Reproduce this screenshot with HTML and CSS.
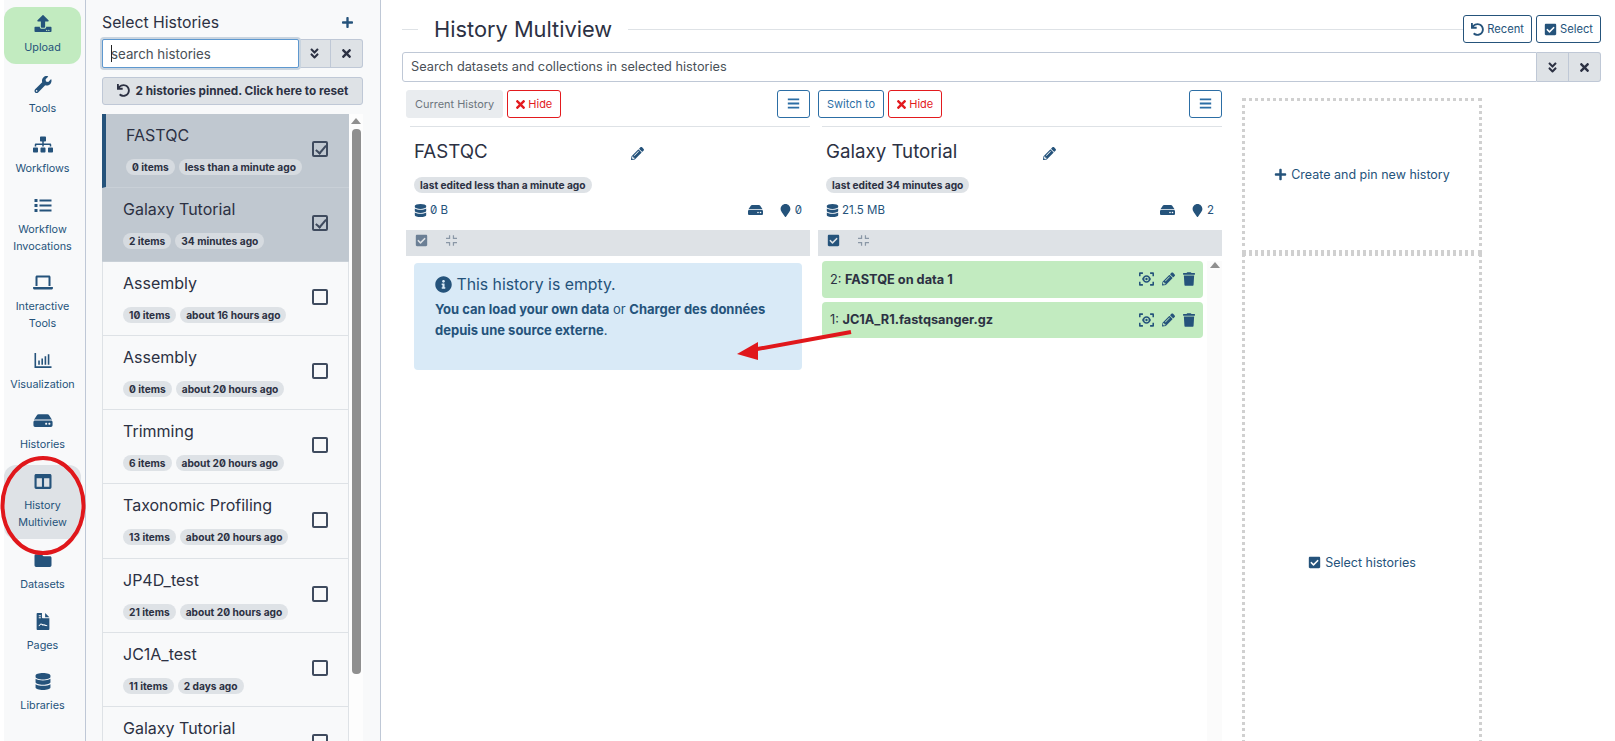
FILE: index.html
```html
<!DOCTYPE html>
<html lang="en">
<head>
    <meta charset="UTF-8">
    <title>Galaxy - History Multiview</title>
    <link rel="stylesheet" href="styles.css">
</head>
<body>
<svg class="sprites" width="0" height="0">
    <symbol id="i-upload" viewBox="0 0 512 512"><path d="M296 384h-80c-13.3 0-24-10.7-24-24V192h-87.7c-17.8 0-26.7-21.5-14.1-34.1L242.3 5.7c7.5-7.5 19.8-7.5 27.3 0l152.2 152.2c12.6 12.6 3.7 34.1-14.1 34.1H320v168c0 13.3-10.7 24-24 24zm216-8v112c0 13.3-10.7 24-24 24H24c-13.3 0-24-10.7-24-24V376c0-13.3 10.7-24 24-24h136v8c0 30.9 25.1 56 56 56h80c30.9 0 56-25.1 56-56v-8h136c13.3 0 24 10.7 24 24zm-124 88c0-11-9-20-20-20s-20 9-20 20 9 20 20 20 20-9 20-20zm64 0c0-11-9-20-20-20s-20 9-20 20 9 20 20 20 20-9 20-20z"/></symbol>
    <symbol id="i-wrench" viewBox="0 0 512 512"><path d="M507.73 109.1c-2.24-9.03-13.54-12.09-20.12-5.51l-74.36 74.36-67.88-11.31-11.31-67.88 74.36-74.36c6.62-6.62 3.43-17.9-5.66-20.16-47.38-11.74-99.55.91-136.58 37.93-39.64 39.64-50.55 97.1-34.05 147.2L18.74 402.76c-24.99 24.99-24.99 65.51 0 90.5 24.99 24.99 65.51 24.99 90.5 0l213.21-213.21c50.12 16.71 107.47 5.68 147.37-34.22 37.07-37.07 49.7-89.32 37.91-136.73zM64 472c-13.25 0-24-10.75-24-24 0-13.26 10.75-24 24-24s24 10.74 24 24c0 13.25-10.75 24-24 24z"/></symbol>
    <symbol id="i-sitemap" viewBox="0 0 640 512"><path d="M128 352H32c-17.67 0-32 14.33-32 32v96c0 17.67 14.33 32 32 32h96c17.67 0 32-14.33 32-32v-96c0-17.67-14.33-32-32-32zm-24-80h192v48h48v-48h192v48h48v-57.59c0-21.17-17.23-38.41-38.41-38.41H344v-64h40c17.67 0 32-14.33 32-32V32c0-17.67-14.33-32-32-32H256c-17.67 0-32 14.33-32 32v96c0 17.67 14.33 32 32 32h40v64H94.41C73.23 224 56 241.23 56 262.41V320h48v-48zm264 80h-96c-17.67 0-32 14.33-32 32v96c0 17.67 14.33 32 32 32h96c17.67 0 32-14.33 32-32v-96c0-17.67-14.33-32-32-32zm240 0h-96c-17.67 0-32 14.33-32 32v96c0 17.67 14.33 32 32 32h96c17.67 0 32-14.33 32-32v-96c0-17.67-14.33-32-32-32z"/></symbol>
    <symbol id="i-list" viewBox="0 0 512 512"><path d="M0 60h90v90H0zM0 211h90v90H0zM0 362h90v90H0zM150 75h362v60H150zM150 226h362v60H150zM150 377h362v60H150z"/></symbol>
    <symbol id="i-laptop" viewBox="0 0 640 512"><path d="M128 32h384c26 0 48 22 48 48v288h-64V96H144v272H80V80c0-26 22-48 48-48zM16 400h608c9 0 16 7 16 16v16c0 26-22 48-48 48H48c-26 0-48-22-48-48v-16c0-9 7-16 16-16z"/></symbol>
    <symbol id="i-chart" viewBox="0 0 512 512"><path d="M0 32h48v400h464v48H0zM112 256h48v128h-48zM208 192h48v192h-48zM304 128h48v256h-48zM400 64h48v320h-48z"/></symbol>
    <symbol id="i-hdd" viewBox="0 0 576 512"><path d="M576 304v96c0 26.51-21.49 48-48 48H48c-26.51 0-48-21.49-48-48v-96c0-26.51 21.49-48 48-48h480c26.51 0 48 21.49 48 48zm-48-80a79.557 79.557 0 0 1 30.777 6.165L462.25 85.374A48.003 48.003 0 0 0 422.311 64H153.689a48 48 0 0 0-39.938 21.374L17.223 230.165A79.557 79.557 0 0 1 48 224h480zm-48 96c-17.673 0-32 14.327-32 32s14.327 32 32 32 32-14.327 32-32-14.327-32-32-32zm-96 0c-17.673 0-32 14.327-32 32s14.327 32 32 32 32-14.327 32-32-14.327-32-32-32z"/></symbol>
    <symbol id="i-columns" viewBox="0 0 512 512"><path d="M464 32H48C21.49 32 0 53.49 0 80v352c0 26.51 21.49 48 48 48h416c26.51 0 48-21.49 48-48V80c0-26.51-21.49-48-48-48zM224 416H64V160h160v256zm224 0H288V160h160v256z"/></symbol>
    <symbol id="i-folder" viewBox="0 0 512 512"><path d="M464 128H272l-64-64H48C21.49 64 0 85.49 0 112v288c0 26.51 21.49 48 48 48h416c26.51 0 48-21.49 48-48V176c0-26.51-21.49-48-48-48z"/></symbol>
    <symbol id="i-page" viewBox="0 0 384 512"><path fill-rule="evenodd" d="M24 0h136v136c0 13 11 24 24 24h200v328c0 13-11 24-24 24H24c-13 0-24-11-24-24V24C0 11 11 0 24 0zm232 0l128 128h-128zM64 64v32h64V64zm0 64v32h64v-32zm0 272c40 0 50-50 70-50s20 30 40 30 30-10 50 0 40 20 96 20v-30c-50 0-60-20-90-28s-40 0-56-8-25-24-44-20c-30 6-40 56-66 56z"/></symbol>
    <symbol id="i-database" viewBox="0 0 448 512"><path d="M448 73.143v45.714C448 159.143 347.667 192 224 192S0 159.143 0 118.857V73.143C0 32.857 100.333 0 224 0s224 32.857 224 73.143zM448 176v102.857C448 319.143 347.667 352 224 352S0 319.143 0 278.857V176c48.125 33.143 136.208 48.572 224 48.572S399.874 209.143 448 176zm0 160v102.857C448 479.143 347.667 512 224 512S0 479.143 0 438.857V336c48.125 33.143 136.208 48.572 224 48.572S399.874 369.143 448 336z"/></symbol>
    <symbol id="i-plus" viewBox="0 0 448 512"><path d="M416 208H272V64c0-17.67-14.33-32-32-32h-32c-17.67 0-32 14.33-32 32v144H32c-17.67 0-32 14.33-32 32v32c0 17.67 14.33 32 32 32h144v144c0 17.67 14.33 32 32 32h32c17.67 0 32-14.33 32-32V304h144c17.67 0 32-14.33 32-32v-32c0-17.67-14.33-32-32-32z"/></symbol>
    <symbol id="i-times" viewBox="0 0 352 512"><path d="M242.72 256l100.07-100.07c12.28-12.28 12.28-32.19 0-44.48l-22.24-22.24c-12.28-12.28-32.19-12.28-44.48 0L176 189.28 75.93 89.21c-12.28-12.28-32.19-12.28-44.48 0L9.21 111.45c-12.28 12.28-12.28 32.19 0 44.48L109.28 256 9.21 356.07c-12.28 12.28-12.28 32.19 0 44.48l22.24 22.24c12.28 12.28 32.2 12.28 44.48 0L176 322.72l100.07 100.07c12.28 12.28 32.2 12.28 44.48 0l22.24-22.24c12.28-12.28 12.28-32.19 0-44.48L242.72 256z"/></symbol>
    <symbol id="i-chevrons" viewBox="0 0 320 512"><path d="M143 256.3L7 120.3c-9.4-9.4-9.4-24.6 0-33.9l22.6-22.6c9.4-9.4 24.6-9.4 33.9 0l96.4 96.4 96.4-96.4c9.4-9.4 24.6-9.4 33.9 0L313 86.3c9.4 9.4 9.4 24.6 0 33.9l-136 136c-9.4 9.5-24.6 9.5-34 .1zm34 192l136-136c9.4-9.4 9.4-24.6 0-33.9l-22.6-22.6c-9.4-9.4-24.6-9.4-33.9 0L160 352.1l-96.4-96.4c-9.4-9.4-24.6-9.4-33.9 0L7 278.3c-9.4 9.4-9.4 24.6 0 33.9l136 136c9.4 9.5 24.6 9.5 34 .1z"/></symbol>
    <symbol id="i-undo" viewBox="0 0 512 512"><path d="M212.333 224.333H12c-6.627 0-12-5.373-12-12V12C0 5.373 5.373 0 12 0h48c6.627 0 12 5.373 12 12v78.112C117.773 39.279 184.26 7.47 258.175 8.007c136.906.994 246.448 111.623 246.157 248.532C504.041 393.258 393.12 504 256.333 504c-64.089 0-122.496-24.313-166.51-64.215-5.099-4.622-5.334-12.554-.467-17.42l33.967-33.967c4.474-4.474 11.662-4.717 16.401-.525C170.76 415.336 211.58 432 256.333 432c97.268 0 176-78.716 176-176 0-97.267-78.716-176-176-176-58.496 0-110.28 28.476-142.274 72.333h98.274c6.627 0 12 5.373 12 12v48c0 6.627-5.373 12-12 12z"/></symbol>
    <symbol id="i-pen" viewBox="0 0 512 512"><path d="M497.9 142.1l-46.1 46.1c-4.7 4.7-12.3 4.7-17 0l-111-111c-4.7-4.7-4.7-12.3 0-17l46.1-46.1c18.7-18.7 49.1-18.7 67.9 0l60.1 60.1c18.8 18.7 18.8 49.1 0 67.9zM284.2 99.8L21.6 362.4.4 483.9c-2.9 16.4 11.4 30.6 27.8 27.8l121.5-21.3 262.6-262.6c4.7-4.7 4.7-12.3 0-17l-111-111c-4.8-4.7-12.4-4.7-17.1 0zM124.1 339.9c-5.5-5.5-5.5-14.3 0-19.8l154-154c5.5-5.5 14.3-5.5 19.8 0s5.5 14.3 0 19.8l-154 154c-5.5 5.5-14.3 5.5-19.8 0zM88 424h48v36.3l-64.5 11.3-31.1-31.1L51.7 376H88v48z"/></symbol>
    <symbol id="i-trash" viewBox="0 0 448 512"><path d="M432 32H312l-9.4-18.7A24 24 0 0 0 281.1 0H166.8a23.72 23.72 0 0 0-21.4 13.3L136 32H16A16 16 0 0 0 0 48v32a16 16 0 0 0 16 16h416a16 16 0 0 0 16-16V48a16 16 0 0 0-16-16zM53.2 467a48 48 0 0 0 47.9 45h245.8a48 48 0 0 0 47.9-45L416 128H32z"/></symbol>
    <symbol id="i-marker" viewBox="0 0 384 512"><path d="M172.268 501.67C26.97 291.031 0 256.784 0 192 0 85.961 85.961 0 192 0s192 85.961 192 192c0 64.784-26.97 99.031-172.268 309.67-9.535 13.774-29.93 13.773-39.464 0z"/></symbol>
    <symbol id="i-info" viewBox="0 0 512 512"><path d="M256 8C119.043 8 8 119.083 8 256c0 136.997 111.043 248 248 248s248-111.003 248-248C504 119.083 392.957 8 256 8zm0 110c23.196 0 42 18.804 42 42s-18.804 42-42 42-42-18.804-42-42 18.804-42 42-42zm56 254c0 6.627-5.373 12-12 12h-88c-6.627 0-12-5.373-12-12v-24c0-6.627 5.373-12 12-12h12v-64h-12c-6.627 0-12-5.373-12-12v-24c0-6.627 5.373-12 12-12h64c6.627 0 12 5.373 12 12v100h12c6.627 0 12 5.373 12 12v24z"/></symbol>
    <symbol id="i-check" viewBox="0 0 448 512"><path d="M400 480H48c-26.51 0-48-21.49-48-48V80c0-26.51 21.49-48 48-48h352c26.51 0 48 21.49 48 48v352c0 26.51-21.49 48-48 48zm-204.686-98.059l184-184c6.248-6.248 6.248-16.379 0-22.627l-22.627-22.627c-6.248-6.248-16.379-6.249-22.628 0L184 302.745l-70.059-70.059c-6.248-6.248-16.379-6.248-22.627 0l-22.627 22.627c-6.248 6.248-6.248 16.379 0 22.627l104 104c6.249 6.25 16.379 6.25 22.628.001z"/></symbol>
    <symbol id="i-bars" viewBox="0 0 448 512"><path d="M0 60h448v72H0zM0 220h448v72H0zM0 380h448v72H0z"/></symbol>
    <symbol id="i-compress" viewBox="0 0 448 512"><path d="M120 40h50v150H0v-50h120zM278 40h50v100h120v50H278zM0 322h170v150h-50V372H0zM278 322h170v50H328v100h-50z"/></symbol>
    <symbol id="i-scan" viewBox="0 0 576 512"><path d="M40 0h110v60H60v90H0V40C0 18 18 0 40 0zM426 0h110c22 0 40 18 40 40v110h-60V60h-90zM0 362h60v90h90v60H40c-22 0-40-18-40-40zM516 362h60v110c0 22-18 40-40 40H426v-60h90zM288 110c85 0 150 80 170 146-20 66-85 146-170 146S138 322 118 256c20-66 85-146 170-146zm0 60a86 86 0 1 0 0 172 86 86 0 0 0 0-172zm0 40a46 46 0 1 1 0 92 46 46 0 0 1 0-92z"/></symbol>
</svg>

<div class="app">
    <nav class="activity-bar">
        <a class="activity upload"><svg class="icon"><use href="#i-upload"/></svg><span>Upload</span></a>
        <a class="activity"><svg class="icon"><use href="#i-wrench"/></svg><span>Tools</span></a>
        <a class="activity"><svg class="icon"><use href="#i-sitemap"/></svg><span>Workflows</span></a>
        <a class="activity two-line"><svg class="icon"><use href="#i-list"/></svg><span>Workflow Invocations</span></a>
        <a class="activity two-line"><svg class="icon"><use href="#i-laptop"/></svg><span>Interactive Tools</span></a>
        <a class="activity"><svg class="icon"><use href="#i-chart"/></svg><span>Visualization</span></a>
        <a class="activity"><svg class="icon"><use href="#i-hdd"/></svg><span>Histories</span></a>
        <a class="activity two-line active"><svg class="icon"><use href="#i-columns"/></svg><span>History Multiview</span></a>
        <a class="activity"><svg class="icon"><use href="#i-folder"/></svg><span>Datasets</span></a>
        <a class="activity"><svg class="icon"><use href="#i-page"/></svg><span>Pages</span></a>
        <a class="activity"><svg class="icon"><use href="#i-database"/></svg><span>Libraries</span></a>
    </nav>

    <aside class="side-panel">
        <div class="panel-title">
            <span>Select Histories</span>
            <svg class="icon-sm"><use href="#i-plus"/></svg>
        </div>
        <div class="search-group">
            <div class="panel-input"><span class="caret"></span>search histories</div>
            <button class="addon"><svg class="icon-xs"><use href="#i-chevrons"/></svg></button>
            <button class="addon"><svg class="icon-xs"><use href="#i-times"/></svg></button>
        </div>
        <button class="reset-btn"><svg class="icon-xs"><use href="#i-undo"/></svg> 2 histories pinned. Click here to reset</button>

        <div class="history-scroll">
            <ul class="history-list">
                <li class="history selected current">
                    <div class="history-text"><div class="history-name">FASTQC</div><span class="pill">0 items</span><span class="pill">less than a minute ago</span></div>
                    <span class="box checked"></span>
                </li>
                <li class="history selected">
                    <div class="history-text"><div class="history-name">Galaxy Tutorial</div><span class="pill">2 items</span><span class="pill">34 minutes ago</span></div>
                    <span class="box checked"></span>
                </li>
                <li class="history">
                    <div class="history-text"><div class="history-name">Assembly</div><span class="pill">10 items</span><span class="pill">about 16 hours ago</span></div>
                    <span class="box"></span>
                </li>
                <li class="history">
                    <div class="history-text"><div class="history-name">Assembly</div><span class="pill">0 items</span><span class="pill">about 20 hours ago</span></div>
                    <span class="box"></span>
                </li>
                <li class="history">
                    <div class="history-text"><div class="history-name">Trimming</div><span class="pill">6 items</span><span class="pill">about 20 hours ago</span></div>
                    <span class="box"></span>
                </li>
                <li class="history">
                    <div class="history-text"><div class="history-name">Taxonomic Profiling</div><span class="pill">13 items</span><span class="pill">about 20 hours ago</span></div>
                    <span class="box"></span>
                </li>
                <li class="history">
                    <div class="history-text"><div class="history-name">JP4D_test</div><span class="pill">21 items</span><span class="pill">about 20 hours ago</span></div>
                    <span class="box"></span>
                </li>
                <li class="history">
                    <div class="history-text"><div class="history-name">JC1A_test</div><span class="pill">11 items</span><span class="pill">2 days ago</span></div>
                    <span class="box"></span>
                </li>
                <li class="history">
                    <div class="history-text"><div class="history-name">Galaxy Tutorial</div></div>
                    <span class="box"></span>
                </li>
            </ul>
            <div class="scrollbar"><span class="arrow-up"></span><span class="thumb"></span></div>
        </div>
    </aside>

    <main class="center">
        <header class="page-head">
            <h1>History Multiview</h1>
            <div class="head-actions">
                <button class="btn-outline"><svg class="icon-xs"><use href="#i-undo"/></svg> Recent</button>
                <button class="btn-outline"><svg class="icon-xs"><use href="#i-check"/></svg> Select</button>
            </div>
        </header>

        <div class="main-search">
            <div class="main-input">Search datasets and collections in selected histories</div>
            <button class="addon"><svg class="icon-xs"><use href="#i-chevrons"/></svg></button>
            <button class="addon"><svg class="icon-xs"><use href="#i-times"/></svg></button>
        </div>

        <div class="columns">
            <section class="column">
                <div class="col-actions">
                    <span class="btn-muted">Current History</span>
                    <button class="btn-danger"><svg class="icon-xxs"><use href="#i-times"/></svg> Hide</button>
                    <button class="btn-blue btn-menu"><svg class="icon-xs"><use href="#i-bars"/></svg></button>
                </div>
                <div class="col-head">
                    <div class="col-title"><h2>FASTQC</h2><svg class="icon-xs"><use href="#i-pen"/></svg></div>
                    <span class="pill edited">last edited less than a minute ago</span>
                    <div class="stats">
                        <svg class="icon-xs"><use href="#i-database"/></svg><span class="size">0 B</span>
                        <svg class="stat-hdd"><use href="#i-hdd"/></svg>
                        <svg class="icon-xs stat-pin"><use href="#i-marker"/></svg><span>0</span>
                    </div>
                </div>
                <div class="toolbar">
                    <svg class="icon-xs muted"><use href="#i-check"/></svg>
                    <svg class="icon-xs faint"><use href="#i-compress"/></svg>
                </div>
                <div class="empty-alert">
                    <h3><svg class="icon-info"><use href="#i-info"/></svg> This history is empty.</h3>
                    <p><b>You can load your own data</b> or <b>Charger des données</b><br><b>depuis une source externe</b>.</p>
                </div>
            </section>

            <section class="column">
                <div class="col-actions">
                    <button class="btn-blue">Switch to</button>
                    <button class="btn-danger"><svg class="icon-xxs"><use href="#i-times"/></svg> Hide</button>
                    <button class="btn-blue btn-menu"><svg class="icon-xs"><use href="#i-bars"/></svg></button>
                </div>
                <div class="col-head">
                    <div class="col-title"><h2>Galaxy Tutorial</h2><svg class="icon-xs"><use href="#i-pen"/></svg></div>
                    <span class="pill edited">last edited 34 minutes ago</span>
                    <div class="stats">
                        <svg class="icon-xs"><use href="#i-database"/></svg><span class="size">21.5 MB</span>
                        <svg class="stat-hdd"><use href="#i-hdd"/></svg>
                        <svg class="icon-xs stat-pin"><use href="#i-marker"/></svg><span>2</span>
                    </div>
                </div>
                <div class="toolbar">
                    <svg class="icon-xs"><use href="#i-check"/></svg>
                    <svg class="icon-xs faint"><use href="#i-compress"/></svg>
                </div>
                <div class="datasets">
                    <div class="dataset-list">
                        <div class="dataset">
                            <span>2: <b>FASTQE on data 1</b></span>
                            <span class="dataset-icons"><svg class="act-scan"><use href="#i-scan"/></svg><svg class="act-pen"><use href="#i-pen"/></svg><svg class="act-trash"><use href="#i-trash"/></svg></span>
                        </div>
                        <div class="dataset">
                            <span>1: <b>JC1A_R1.fastqsanger.gz</b></span>
                            <span class="dataset-icons"><svg class="act-scan"><use href="#i-scan"/></svg><svg class="act-pen"><use href="#i-pen"/></svg><svg class="act-trash"><use href="#i-trash"/></svg></span>
                        </div>
                    </div>
                    <div class="gutter"><span class="arrow-up"></span></div>
                </div>
            </section>

            <section class="drop-col">
                <div class="drop-box drop-top"><svg class="icon-xs"><use href="#i-plus"/></svg> Create and pin new history</div>
                <div class="drop-box drop-bottom"><svg class="icon-xs"><use href="#i-check"/></svg> Select histories</div>
            </section>
        </div>
    </main>
</div>

<!-- red annotations drawn over the screenshot -->
<svg class="annotations" width="1615" height="741">
    <ellipse cx="43" cy="505.5" rx="40.5" ry="47.5" fill="none" stroke="#e0171b" stroke-width="4"/>
    <line x1="851" y1="332" x2="752" y2="350" stroke="#e0171b" stroke-width="4"/>
    <polygon points="737,354 758,342 758,360" fill="#e0171b"/>
</svg>
</body>
</html>
```

FILE: styles.css
```css
* {
    box-sizing: border-box;
}
html, body {
    margin: 0;
    height: 100%;
    overflow: hidden;
}
body {
    font-family: "Inter", "Noto Sans", sans-serif;
    font-size: 13px;
    color: #2c3143;
    background: #fff;
    font-feature-settings: "zero" 1;
}
.sprites {
    position: absolute;
}
.annotations {
    position: absolute;
    top: 0;
    left: 0;
    pointer-events: none;
}
svg {
    fill: #25537b;
    flex-shrink: 0;
}
button {
    font: inherit;
    cursor: pointer;
}
.app {
    display: flex;
    height: 741px;
    overflow: hidden;
}

/* left activity bar */
.activity-bar {
    width: 86px;
    flex-shrink: 0;
    padding: 7px 4px 0;
    background: linear-gradient(to right, #fff 4px, #f8f9fa 4px);
    border-right: 1px solid #bfc8d6;
    display: flex;
    flex-direction: column;
    gap: 3.5px;
}
.activity {
    display: flex;
    flex-direction: column;
    align-items: center;
    padding: 8px 2px 0;
    height: 57px;
    border-radius: 12px;
    font-size: 10.8px;
    line-height: 17px;
    color: #25537b;
    text-align: center;
}
.activity.two-line {
    height: 74px;
}
.activity.upload {
    background: #c2ebc0;
}
.activity.active {
    background: #dee2e6;
    margin-bottom: 2px;
}
.icon {
    width: 20px;
    height: 17px;
    margin-bottom: 7px;
}
.icon-sm {
    width: 11px;
    height: 13px;
}
.icon-xs {
    width: 13px;
    height: 13px;
}
.icon-xxs {
    width: 9px;
    height: 13px;
    fill: #e31a1e;
    vertical-align: -3px;
}

/* select histories panel */
.side-panel {
    width: 295px;
    flex-shrink: 0;
    padding: 0 17px 0 16px;
    background: #f8f9fa;
    border-right: 1px solid #bfc8d6;
    display: flex;
    flex-direction: column;
}
.panel-title {
    height: 39px;
    padding: 12px 10px 7px 0;
    font-size: 15.8px;
    display: flex;
    justify-content: space-between;
    align-items: center;
}
.search-group {
    display: flex;
    height: 29px;
}
.panel-input {
    width: 198px;
    background: #fff;
    border: 1px solid #5e98cf;
    border-radius: 2px;
    box-shadow: 0 0 0 2px #c9d4df;
    padding-left: 8px;
    font-size: 13.3px;
    line-height: 28px;
    color: #495057;
    position: relative;
    z-index: 1;
}
.caret {
    position: absolute;
    left: 8px;
    top: 5px;
    height: 17px;
    border-left: 1px solid #222;
}
.addon {
    width: 32px;
    padding: 0;
    background: #dee2e6;
    border: 1px solid #bfc8d6;
    border-left: 0;
    display: flex;
    align-items: center;
    justify-content: center;
}
.addon:last-child {
    border-radius: 0 3px 3px 0;
}
.addon svg {
    fill: #2c3143;
    width: 11px;
}
.reset-btn {
    margin-top: 9px;
    height: 28px;
    padding: 0;
    background: #dee2e6;
    border: 1px solid #bfc8d6;
    border-radius: 3px;
    font-size: 11.75px;
    font-weight: 700;
    color: #2c3143;
}
.reset-btn svg {
    fill: #2c3143;
    vertical-align: -2px;
    margin-right: 3px;
}
.history-scroll {
    margin-top: 9px;
    display: flex;
    flex: 1;
    min-height: 0;
    overflow: hidden;
}
.history-list {
    list-style: none;
    margin: 0;
    padding: 0;
    width: 247px;
    flex-shrink: 0;
}
.history {
    height: 74.1px;
    padding: 0 20px 0 20px;
    display: flex;
    align-items: center;
    justify-content: space-between;
    border: solid #dee2e6;
    border-width: 0 1px 1px;
}
.history.selected {
    background: #c0c8d0;
    border-color: #c9d0d7;
    border-width: 0 0 1px;
    padding-left: 21px;
    padding-right: 21px;
}
.history.current {
    border-left: 4px solid #25537b;
    padding-left: 20px;
}
.history-text {
    align-self: flex-start;
    padding-top: 10px;
}
.history-name {
    font-size: 16px;
    line-height: 22px;
    margin-bottom: 13px;
    white-space: nowrap;
}
.pill {
    display: inline-block;
    height: 16px;
    padding: 0 6px;
    margin-right: 4px;
    border-radius: 8px;
    background: #dee2e6;
    font-size: 10.2px;
    line-height: 16px;
    font-weight: 700;
    color: #2c3143;
    white-space: nowrap;
    vertical-align: top;
}
.selected .pill {
    background: #d6dbe0;
}
.box {
    width: 16px;
    height: 16px;
    margin-bottom: 3px;
    border: 2px solid #3f4b5e;
    border-radius: 2px;
    flex-shrink: 0;
    position: relative;
}
.selected .box {
    margin-bottom: 4px;
}
.box.checked::after {
    content: "";
    position: absolute;
    left: 4px;
    top: 0;
    width: 4px;
    height: 9px;
    border: solid #3f4b5e;
    border-width: 0 2px 2px 0;
    transform: rotate(40deg);
}
.scrollbar {
    width: 15px;
    padding-top: 4px;
    background: #fdfdfd;
    display: flex;
    flex-direction: column;
    align-items: center;
    gap: 5px;
}
.arrow-up {
    width: 0;
    height: 0;
    border: 5px solid transparent;
    border-top: 0;
    border-bottom: 6px solid #8f8f8f;
}
.thumb {
    width: 9px;
    height: 545px;
    background: #8f8f8f;
    border-radius: 4px;
}

/* center */
.center {
    flex: 1;
    min-width: 0;
    padding: 15px 14px 0 21px;
    overflow: hidden;
}
.page-head {
    height: 28px;
    padding-left: 16px;
    display: flex;
    justify-content: space-between;
    align-items: center;
    background: linear-gradient(#dee2e6, #dee2e6) no-repeat 0 14px / 100% 1px;
}
.page-head h1 {
    margin: 0;
    padding: 0 16px;
    font-size: 21.8px;
    font-weight: 400;
    line-height: 28px;
    background: #fff;
    color: #2c3143;
}
.head-actions {
    display: flex;
    gap: 4px;
    background: #fff;
}
.btn-outline {
    height: 28px;
    padding: 0 7px;
    background: #fff;
    border: 1px solid #25537b;
    border-radius: 3px;
    font-size: 11.2px;
    color: #25537b;
    display: flex;
    align-items: center;
    gap: 3px;
}
.main-search {
    margin-top: 9px;
    display: flex;
    height: 30px;
}
.main-input {
    flex: 1;
    border: 1px solid #bfc8d6;
    border-radius: 3px 0 0 3px;
    padding-left: 8px;
    line-height: 27px;
    font-size: 12.75px;
    color: #495057;
}
.columns {
    display: flex;
    margin-top: 8px;
}
.column {
    width: 404px;
    flex-shrink: 0;
    margin-left: 4px;
}
.column + .column {
    margin-left: 8px;
}
.col-actions {
    display: flex;
    gap: 4px;
    height: 37px;
    padding-bottom: 8px;
    border-bottom: 1px solid #dee2e6;
    margin-left: 4px;
}
.btn-muted, .btn-danger, .btn-blue {
    height: 28px;
    padding: 0 8px;
    border-radius: 3px;
    font-size: 11px;
    line-height: 26px;
    background: #fff;
    white-space: nowrap;
}
.btn-muted {
    margin-left: -4px;
    padding: 0 8px;
    font-size: 10.95px;
    background: #e9ecef;
    border: 1px solid #e9ecef;
    color: #6c757d;
}
.btn-danger {
    border: 1px solid #e31a1e;
    color: #e31a1e;
}
.btn-blue {
    border: 1px solid #2c6ea5;
    color: #2c6ea5;
}
.btn-menu {
    margin-left: auto;
    width: 33px;
    padding: 0;
}
.btn-menu svg {
    fill: #2c6ea5;
    vertical-align: -2px;
}
.column + .column .btn-blue:first-child {
    margin-left: -4px;
}
.col-head {
    padding: 11px 8px 0;
    height: 103px;
}
.col-title {
    display: flex;
    height: 26px;
    justify-content: space-between;
    align-items: center;
    padding-right: 158px;
}
.col-title h2 {
    margin: 0;
    font-size: 18.7px;
    font-weight: 400;
    color: #2c3143;
}
.col-title svg {
    margin-top: 4px;
}
.col-head .edited {
    margin-top: 13px;
    display: block;
    width: max-content;
}
.stats {
    margin-top: 8px;
    display: flex;
    align-items: center;
    height: 18px;
    font-size: 11.5px;
    color: #25537b;
}
.stats .size {
    margin-left: 3px;
}
.stat-hdd {
    width: 15px;
    height: 14px;
    margin-left: auto;
}
.stat-pin {
    margin-left: 16px;
    margin-right: 3px;
}
.toolbar {
    height: 26px;
    background: #dee2e6;
    display: flex;
    align-items: center;
    padding: 0 0 5px 9px;
    gap: 18px;
}
.toolbar .muted {
    fill: #6b7f95;
}
.toolbar .faint {
    fill: #8a97a6;
    width: 11px;
}
.empty-alert {
    margin: 7px 8px 0;
    height: 107px;
    padding: 11px 21px;
    background: #d9eaf7;
    border-radius: 4px;
    color: #25537b;
}
.empty-alert h3 {
    margin: 0 0 3px;
    font-size: 15.8px;
    font-weight: 400;
    line-height: 22px;
}
.icon-info {
    width: 17px;
    height: 17px;
    vertical-align: -3px;
}
.empty-alert p {
    margin: 0;
    font-size: 13px;
    line-height: 21px;
}
.datasets {
    display: flex;
    padding: 5px 0 0 4px;
}
.dataset-list {
    flex: 1;
    display: flex;
    flex-direction: column;
    gap: 4px;
}
.dataset {
    height: 36.5px;
    padding: 0 8px;
    background: #c2ebc0;
    border-radius: 4px;
    display: flex;
    justify-content: space-between;
    align-items: center;
    font-size: 12.75px;
    color: #2c3143;
}
.dataset-icons {
    display: flex;
    align-items: center;
    gap: 8px;
}
.act-scan {
    width: 15px;
    height: 14px;
}
.act-pen {
    width: 13px;
    height: 14px;
}
.act-trash {
    width: 12px;
    height: 14px;
}
.gutter {
    width: 15px;
    margin-left: 4px;
    padding-top: 1px;
    background: #fbfbfb;
    display: flex;
    justify-content: center;
    height: 500px;
}

/* pin targets on the right */
.drop-col {
    width: 240px;
    margin-left: 20px;
    margin-top: 8px;
    display: flex;
    flex-direction: column;
}
.drop-box {
    display: flex;
    flex-shrink: 0;
    align-items: center;
    justify-content: center;
    gap: 4px;
    border: 3px dotted #d0d0d0;
    font-size: 12.5px;
    color: #25537b;
}
.drop-top {
    height: 155px;
    padding-bottom: 3px;
}
.drop-bottom {
    height: 618px;
}
```
